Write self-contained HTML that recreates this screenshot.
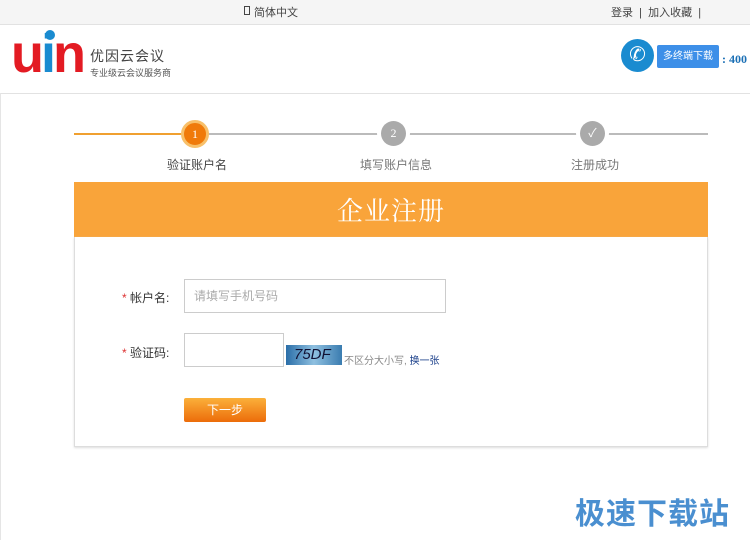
<!DOCTYPE html>
<html><head><meta charset="utf-8"><style>
*{margin:0;padding:0;box-sizing:border-box}
body{width:750px;height:540px;overflow:hidden;background:#fff;font-family:"Liberation Sans","Noto Sans CJK SC",sans-serif;font-size:12px;color:#333;position:relative}
.a{position:absolute}
</style></head><body>
<div class="a" style="left:0;top:0;width:750px;height:25px;background:#f5f5f5;border-bottom:1px solid #e2e2e2"></div>
<div class="a" style="left:244px;top:6px;width:6px;height:9px;border:1px solid #444"></div>
<div class="a" style="left:254px;top:4px;font-size:11px;color:#444">简体中文</div>
<div class="a" style="left:611px;top:4px;font-size:11px;color:#444">登录 &nbsp;|&nbsp; 加入收藏 &nbsp;|</div>
<div class="a" style="left:11px;top:26px;font:bold 54px/56px 'Liberation Sans',sans-serif;letter-spacing:-3px"><span style="color:#e31b23">u</span><span style="color:#1a8bd0">i</span><span style="color:#e31b23">n</span></div>
<div class="a" style="left:45px;top:30px;width:10px;height:10px;border-radius:50%;background:#1a8bd0"></div>
<div class="a" style="left:90px;top:46px;font-size:14px;color:#444;letter-spacing:1px">优因云会议</div>
<div class="a" style="left:90px;top:66px;font-size:9px;color:#555">专业级云会议服务商</div>
<div class="a" style="left:621px;top:39px;width:33px;height:33px;border-radius:50%;background:#1a8bd0;color:#fff;font-size:20px;text-align:center;line-height:33px">✆</div>
<div class="a" style="left:657px;top:45px;width:62px;height:23px;background:#3d8fe8;color:#fff;font-size:10px;text-align:center;line-height:23px;border-radius:2px">多终端下载</div>
<div class="a" style="left:722px;top:52px;color:#1a6fb5;font:bold 12px 'Liberation Serif',serif">: 400</div>
<div class="a" style="left:0;top:93px;width:750px;height:1px;background:#e2e2e2"></div>
<div class="a" style="left:0;top:93px;width:1px;height:447px;background:#e5e5e5"></div>
<div class="a" style="left:74px;top:133px;width:110px;height:2px;background:#f0a030"></div>
<div class="a" style="left:208px;top:133px;width:500px;height:2px;background:#bbb"></div>
<div class="a" style="left:181px;top:120px;width:28px;height:28px;border-radius:50%;background:#f07a0a;border:3px solid #f8c06a;color:#fff;font:12px/22px 'Liberation Serif',serif;text-align:center">1</div>
<div class="a" style="left:381px;top:121px;width:25px;height:25px;border-radius:50%;background:#aaa;color:#fff;font:12px/25px 'Liberation Serif',serif;text-align:center;box-shadow:0 0 0 4px #fff">2</div>
<div class="a" style="left:580px;top:121px;width:25px;height:25px;border-radius:50%;background:#aaa;color:#fff;font-size:12px;line-height:25px;text-align:center;box-shadow:0 0 0 4px #fff">✓</div>
<div class="a" style="left:167px;top:156px;color:#444">验证账户名</div>
<div class="a" style="left:360px;top:156px;color:#777">填写账户信息</div>
<div class="a" style="left:571px;top:156px;color:#777">注册成功</div>
<div class="a" style="left:74px;top:182px;width:634px;height:55px;background:#f9a43a;color:#fff;font:26px/55px 'Noto Serif CJK SC',serif;text-align:center;letter-spacing:1px">企业注册</div>
<div class="a" style="left:74px;top:237px;width:634px;height:210px;border:1px solid #ddd;border-top:none;box-shadow:0 1px 2px #ddd"></div>
<div class="a" style="left:122px;top:289px;font-size:12px"><span style="color:#d33">*</span> 帐户名:</div>
<div class="a" style="left:184px;top:279px;width:262px;height:34px;border:1px solid #ccc;color:#aaa;padding-left:9px;line-height:32px">请填写手机号码</div>
<div class="a" style="left:122px;top:344px;font-size:12px"><span style="color:#d33">*</span> 验证码:</div>
<div class="a" style="left:184px;top:333px;width:100px;height:34px;border:1px solid #ccc"></div>
<div class="a" style="left:286px;top:345px;width:56px;height:20px;background:linear-gradient(90deg,#2a6ea8,#8fc0e0,#3a7cb0);color:#113;font:italic 15px/20px 'Liberation Sans',sans-serif;padding-left:8px">75DF</div>
<div class="a" style="left:344px;top:352px;font-size:10px;color:#888">不区分大小写, <span style="color:#1a3f8a">换一张</span></div>
<div class="a" style="left:184px;top:398px;width:82px;height:24px;background:linear-gradient(#fbb03a,#ec6c0a);border-radius:2px;color:#fff;text-align:center;line-height:24px">下一步</div>
<div class="a" style="left:575px;top:489px;font-size:30px;font-weight:bold;color:#4a8fd0;letter-spacing:1px">极速下载站</div>
</body></html>
